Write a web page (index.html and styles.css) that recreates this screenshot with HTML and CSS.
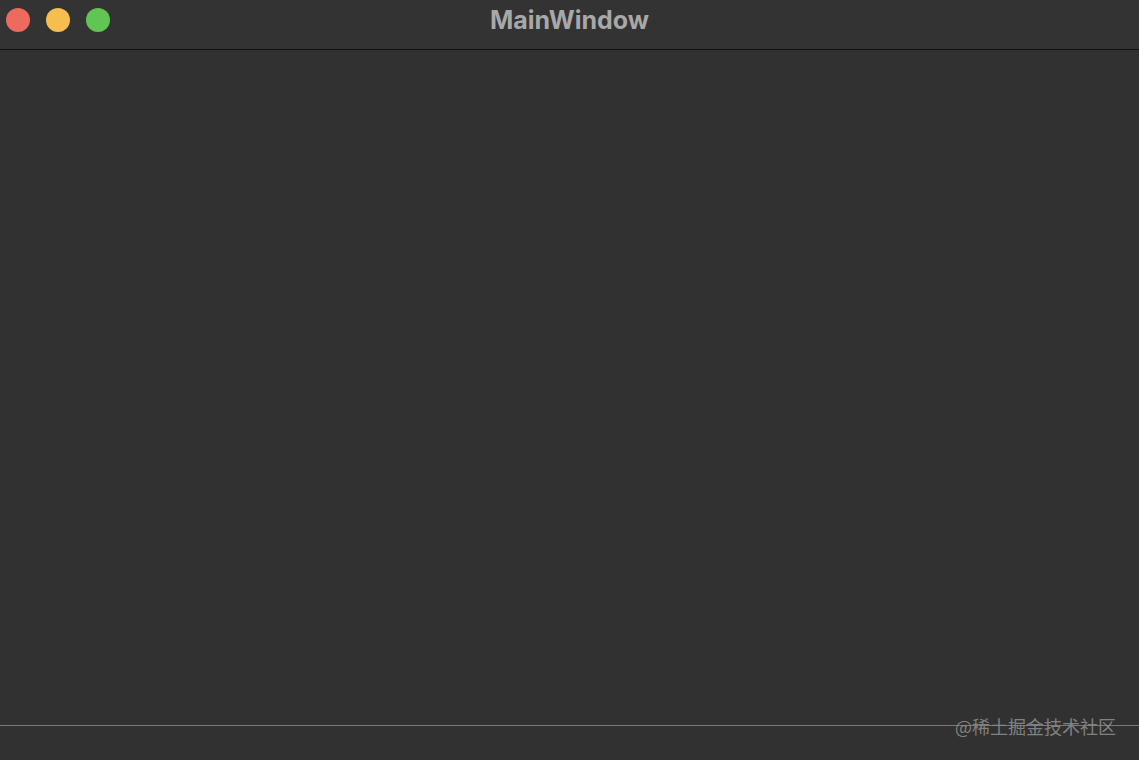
FILE: index.html
```html
<!DOCTYPE html>
<html>
<head>
<meta charset="utf-8">
<link rel="stylesheet" href="styles.css">
</head>
<body>
<div class="window">
  <div class="titlebar">
    <div class="lights">
      <span class="light red"></span>
      <span class="light yellow"></span>
      <span class="light green"></span>
    </div>
    <div class="title">MainWindow</div>
  </div>
  <div class="content"></div>
  <div class="statusbar"></div>
  <div class="watermark">@稀土掘金技术社区</div>
</div>
</body>
</html>
```
FILE: styles.css
```css
html, body {
  margin: 0;
  padding: 0;
  background: #313131;
}
.window {
  position: relative;
  width: 1139px;
  height: 760px;
  display: flex;
  flex-direction: column;
  background: #313131;
  overflow: hidden;
}
.titlebar {
  height: 49px;
  flex: none;
  border-bottom: 1px solid #121212;
  background: #333333;
  display: flex;
  align-items: flex-start;
  position: relative;
}
.lights {
  display: flex;
  gap: 16px;
  padding-left: 6px;
  padding-top: 8px;
}
.light {
  width: 24px;
  height: 24px;
  border-radius: 50%;
  display: block;
}
.red { background: #ee6a5f; }
.yellow { background: #f5be4f; }
.green { background: #61c554; }
.title {
  position: absolute;
  left: 0;
  right: 0;
  top: 4px;
  text-align: center;
  font-family: Inter, "Liberation Sans", sans-serif;
  font-weight: 700;
  font-size: 25px;
  color: #a8a8a8;
  line-height: 32px;
}
.content {
  flex: 1;
  background: #313131;
}
.statusbar {
  height: 34px;
  flex: none;
  border-top: 1px solid #7a7a7a;
  background: #313131;
}
.watermark {
  position: absolute;
  left: 955px;
  top: 714px;
  font-family: "Noto Sans CJK SC", sans-serif;
  font-size: 18px;
  line-height: 24px;
  color: #8a8a8a;
  opacity: 0.9;
}
```
